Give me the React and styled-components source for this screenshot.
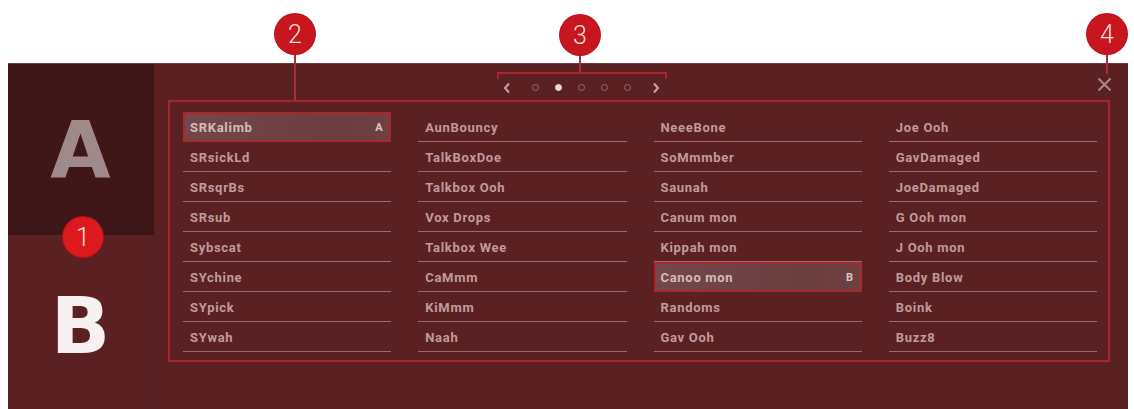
import React from 'react'
import styled, { createGlobalStyle } from 'styled-components'

const GlobalStyle = createGlobalStyle`
  html, body {
    margin: 0;
    padding: 0;
    background: #ffffff;
  }
  body {
    font-family: "Roboto", "Liberation Sans", sans-serif;
  }
`

const columns = [
  ['SRKalimb', 'SRsickLd', 'SRsqrBs', 'SRsub', 'Sybscat', 'SYchine', 'SYpick', 'SYwah'],
  ['AunBouncy', 'TalkBoxDoe', 'Talkbox Ooh', 'Vox Drops', 'Talkbox Wee', 'CaMmm', 'KiMmm', 'Naah'],
  ['NeeeBone', 'SoMmmber', 'Saunah', 'Canum mon', 'Kippah mon', 'Canoo mon', 'Randoms', 'Gav Ooh'],
  ['Joe Ooh', 'GavDamaged', 'JoeDamaged', 'G Ooh mon', 'J Ooh mon', 'Body Blow', 'Boink', 'Buzz8'],
]

// pads currently assigned to slot A / B
const assigned = { SRKalimb: 'A', 'Canoo mon': 'B' }

const Screen = styled.div`
  position: relative;
  width: 1134px;
  height: 409px;
  overflow: hidden;
  background: #ffffff;
  padding-top: 63px;
  box-sizing: border-box;
`

const Panel = styled.div`
  margin-left: 8px;
  width: 1120px;
  height: 346px;
  display: grid;
  grid-template-columns: 146px 1fr;
  background: #5b2022;
  border-top: 1px solid #6e3a3b;
`

const Sidebar = styled.div`
  display: flex;
  flex-direction: column;
`

const SlotTile = styled.div`
  height: ${p => p.$h}px;
  display: flex;
  align-items: center;
  justify-content: center;
  background: ${p => (p.$active ? '#3f1718' : 'transparent')};
  border-right: 1px solid ${p => (p.$active ? '#3a1415' : '#522022')};
  font-family: "DejaVu Sans", sans-serif;
  font-weight: 700;
  font-size: 78px;
  line-height: 1;
  color: ${p => (p.$active ? '#9f898b' : '#f7f1f1')};
`

const Main = styled.div`
  display: flex;
  flex-direction: column;
`

const Header = styled.div`
  height: 36px;
  display: flex;
  align-items: flex-start;
`

const Pager = styled.div`
  position: relative;
  margin-left: 343px;
  margin-top: 8px;
  width: 170px;
  height: 28px;
  display: flex;
  align-items: center;
  padding: 3px 7px 0 6px;
  box-sizing: border-box;

  &::before {
    content: '';
    position: absolute;
    left: 0;
    right: 0;
    top: 0;
    height: 5px;
    border: 2px solid #a3262c;
    border-bottom: none;
  }
`

const Chevron = styled.svg`
  width: 8px;
  height: 12px;
  flex: none;
`

const Dots = styled.div`
  flex: 1;
  display: flex;
  justify-content: center;
  gap: 16px;
`

const Dot = styled.span`
  width: 7px;
  height: 7px;
  border-radius: 50%;
  box-sizing: border-box;
  border: 1.5px solid ${p => (p.$on ? '#e9dcdc' : '#94696b')};
  background: ${p => (p.$on ? '#e9dcdc' : 'transparent')};
`

const Close = styled.button`
  margin-left: auto;
  margin-right: 15px;
  margin-top: 11px;
  width: 18px;
  height: 18px;
  padding: 0;
  border: none;
  background: transparent;
  display: flex;
  align-items: center;
  justify-content: center;
`

const PadBox = styled.div`
  margin: 0 18px 0 14px;
  height: 262px;
  box-sizing: border-box;
  border: 2px solid #a3262c;
  padding: 10px 11px 0 13px;
  display: grid;
  grid-template-columns: repeat(4, 1fr);
  column-gap: 27px;
`

const Column = styled.div`
  display: flex;
  flex-direction: column;
`

const Cell = styled.div`
  height: 30px;
  box-sizing: border-box;
  display: flex;
  align-items: center;
  justify-content: space-between;
  padding: ${p => (p.$slot ? '0 6px 0 5px' : '1px 7px 0 7px')};
  border-bottom: 1px solid #9a6a6c;
  border: ${p => (p.$slot ? '2px solid #a5292f' : undefined)};
  background: ${p => (p.$slot ? 'linear-gradient(90deg, #74474a, #6b3e40 70%, #6f3f41)' : 'transparent')};
  font-size: 13px;
  font-weight: 700;
  letter-spacing: 0.7px;
  color: ${p => (p.$slot ? '#d2bcbd' : '#c09b9d')};
`

const SlotMark = styled.span`
  font-size: 11px;
  color: #d9c8c8;
`

const Badge = styled.div`
  position: absolute;
  left: ${p => p.$x - 20}px;
  top: ${p => p.$y - 20}px;
  width: 40px;
  height: 40px;
  border-radius: 50%;
  background: ${p => (p.$bright ? '#dc1a1e' : '#c8161e')};
  box-shadow: 0 0 0 1px #b31219;
  color: #f6dede;
  font-family: "Roboto", sans-serif;
  font-weight: 300;
  font-size: 25px;
  display: flex;
  align-items: center;
  justify-content: center;
`

const Leader = styled.div`
  position: absolute;
  left: ${p => p.$x}px;
  top: ${p => p.$top}px;
  width: 2px;
  height: ${p => p.$h}px;
  background: #a8303a;
`

const ChevronIcon = ({ left }) => (
  <Chevron viewBox="0 0 8 12">
    <path
      d={left ? 'M6 1.5 L2 6 L6 10.5' : 'M2 1.5 L6 6 L2 10.5'}
      fill="none"
      stroke="#c9a3a5"
      strokeWidth="2"
    />
  </Chevron>
)

export default function App() {
  return (
    <>
      <GlobalStyle />
      <Screen>
        <Panel>
          <Sidebar>
            <SlotTile $active $h={171}>A</SlotTile>
            <SlotTile $h={182}>B</SlotTile>
          </Sidebar>
          <Main>
            <Header>
              <Pager>
                <ChevronIcon left />
                <Dots>
                  {[0, 1, 2, 3, 4].map(i => (
                    <Dot key={i} $on={i === 1} />
                  ))}
                </Dots>
                <ChevronIcon />
              </Pager>
              <Close aria-label="close">
                <svg width="15" height="15" viewBox="0 0 15 15">
                  <path d="M1.5 1.5 L13.5 13.5 M13.5 1.5 L1.5 13.5" stroke="#a98a8c" strokeWidth="2" />
                </svg>
              </Close>
            </Header>
            <PadBox>
              {columns.map((col, ci) => (
                <Column key={ci}>
                  {col.map(name => (
                    <Cell key={name} $slot={!!assigned[name]}>
                      <span>{name}</span>
                      {assigned[name] && <SlotMark>{assigned[name]}</SlotMark>}
                    </Cell>
                  ))}
                </Column>
              ))}
            </PadBox>
          </Main>
        </Panel>

        <Leader $x={294} $top={52} $h={48} />
        <Leader $x={579} $top={53} $h={19} />
        <Leader $x={1106} $top={53} $h={21} />
        <Badge $x={295} $y={34}>2</Badge>
        <Badge $x={580} $y={35}>3</Badge>
        <Badge $x={1107} $y={34}>4</Badge>
        <Badge $x={83} $y={237} $bright>1</Badge>
      </Screen>
    </>
  )
}
